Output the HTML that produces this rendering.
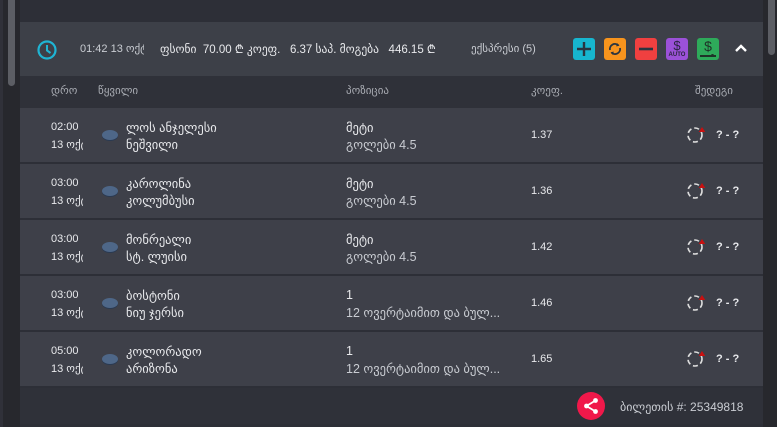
<!DOCTYPE html>
<html><head><meta charset="utf-8"><style>
*{margin:0;padding:0;box-sizing:border-box}
body{width:777px;height:427px;background:#2d2f37;position:relative;overflow:hidden;font-family:"Liberation Sans","DejaVu Sans",sans-serif;color:#e8e9ec}
.abs{position:absolute}
.t{font-size:12.5px;white-space:nowrap}
.row{position:absolute;left:20px;width:743px;height:54px;background:#3e4049}
.btn{position:absolute;top:38px;width:22px;height:22px;border-radius:3px}
.tm{overflow:hidden;width:32px}
</style></head><body>
<div class="abs" style="left:0;top:0;width:3px;height:427px;background:#303139"></div>
<div class="abs" style="left:3px;top:0;width:17px;height:427px;background:#27282d"></div>
<div class="abs" style="left:8px;top:0;width:7px;height:86px;background:#5c5e64;border-radius:0 0 4px 4px"></div>
<div class="abs" style="left:763px;top:0;width:14px;height:427px;background:#27282d"></div>
<div class="abs" style="left:768px;top:0;width:7px;height:55px;background:#5c5e64;border-radius:0 0 4px 4px"></div>

<div class="abs" style="left:20px;top:22px;width:743px;height:54px;background:#3d4048"></div>
<svg class="abs" style="left:36px;top:39px" width="22" height="22" viewBox="0 0 22 22"><circle cx="11" cy="11" r="8.5" fill="none" stroke="#1fb5d4" stroke-width="2.2"/><path d="M11 6v5.5l3.5 2.5" fill="none" stroke="#1fb5d4" stroke-width="2"/></svg>
<div class="abs t" style="left:80px;top:42px;color:#c9ccd2;font-size:11px;width:64px;overflow:hidden">01:42 13 ოქტ</div>
<div class="abs t" style="left:160px;top:42px;font-size:11.5px">ფსონი&nbsp; 70.00 ₾ კოეფ.&nbsp;&nbsp; 6.37 საპ. მოგება&nbsp;&nbsp; 446.15 ₾</div>
<div class="abs t" style="left:471px;top:42px;color:#c9ccd2;font-size:11px">ექსპრესი (5)</div>
<div class="btn" style="left:573px;background:#17b6cf"><svg width="22" height="22"><path d="M11 4v14M4 11h14" stroke="#2a3540" stroke-width="2.4"/></svg></div>
<div class="btn" style="left:604px;background:#f7941d"><svg width="22" height="22"><path d="M6 12a5 5 0 0 1 8.5-4.5M16 10a5 5 0 0 1-8.5 4.5" fill="none" stroke="#2a3540" stroke-width="1.8"/><path d="M13 5l2.5 2.8-3.3.6zM9 17l-2.5-2.8 3.3-.6z" fill="#2a3540"/></svg></div>
<div class="btn" style="left:635px;background:#f04040"><svg width="22" height="22"><path d="M4 11h14" stroke="#2a3540" stroke-width="2.6"/></svg></div>
<div class="btn" style="left:666px;background:#9b51d8"><div style="position:absolute;left:0;width:22px;top:1px;text-align:center;font-size:13px;line-height:14px;color:#2a2540">$</div><div style="position:absolute;left:0;width:22px;top:14px;text-align:center;font-size:6px;color:#2a2540;font-weight:bold">AUTO</div></div>
<div class="btn" style="left:697px;background:#2eaa5a"><div style="position:absolute;left:0;width:22px;top:1px;text-align:center;font-size:14px;line-height:14px;color:#1f3328">$</div><div style="position:absolute;left:3px;top:17px;width:16px;height:1.5px;background:#1f3328"></div><div style="position:absolute;left:14px;top:16px;width:3px;height:3px;border-radius:2px;background:#1f3328"></div></div>
<svg class="abs" style="left:734px;top:43px" width="14" height="10"><path d="M2 8l5-5 5 5" fill="none" stroke="#fff" stroke-width="2.4"/></svg>

<div class="abs" style="left:20px;top:76px;width:743px;height:32px;background:#2f3139"></div>
<div class="abs t" style="left:51px;top:84px;color:#a9acb3;font-size:11px">დრო</div>
<div class="abs t" style="left:98px;top:84px;color:#a9acb3;font-size:11px">წყვილი</div>
<div class="abs t" style="left:346px;top:84px;color:#a9acb3;font-size:11px">პოზიცია</div>
<div class="abs t" style="left:531px;top:84px;color:#a9acb3;font-size:11px">კოეფ.</div>
<div class="abs t" style="left:695px;top:84px;color:#a9acb3;font-size:11px">შედეგი</div>

<div class="row" style="top:108px"></div>
<div class="row" style="top:164px"></div>
<div class="row" style="top:220px"></div>
<div class="row" style="top:276px"></div>
<div class="row" style="top:332px"></div>

<div class="abs t" style="left:51px;top:121px;font-size:11px">02:00</div><div class="abs t tm" style="left:51px;top:138px;font-size:11px">13 ოქტ</div>
<div class="abs t" style="left:51px;top:177px;font-size:11px">03:00</div><div class="abs t tm" style="left:51px;top:194px;font-size:11px">13 ოქტ</div>
<div class="abs t" style="left:51px;top:233px;font-size:11px">03:00</div><div class="abs t tm" style="left:51px;top:250px;font-size:11px">13 ოქტ</div>
<div class="abs t" style="left:51px;top:289px;font-size:11px">03:00</div><div class="abs t tm" style="left:51px;top:306px;font-size:11px">13 ოქტ</div>
<div class="abs t" style="left:51px;top:345px;font-size:11px">05:00</div><div class="abs t tm" style="left:51px;top:362px;font-size:11px">13 ოქტ</div>

<div class="abs" style="left:102px;top:130px;width:16px;height:10px;border-radius:50%;background:#4e6788;box-shadow:0 1px 0 #2a3a52"></div>
<div class="abs" style="left:102px;top:186px;width:16px;height:10px;border-radius:50%;background:#4e6788;box-shadow:0 1px 0 #2a3a52"></div>
<div class="abs" style="left:102px;top:242px;width:16px;height:10px;border-radius:50%;background:#4e6788;box-shadow:0 1px 0 #2a3a52"></div>
<div class="abs" style="left:102px;top:298px;width:16px;height:10px;border-radius:50%;background:#4e6788;box-shadow:0 1px 0 #2a3a52"></div>
<div class="abs" style="left:102px;top:354px;width:16px;height:10px;border-radius:50%;background:#4e6788;box-shadow:0 1px 0 #2a3a52"></div>

<div class="abs t" style="left:126px;top:120px">ლოს ანჯელესი</div><div class="abs t" style="left:126px;top:137px">ნეშვილი</div>
<div class="abs t" style="left:126px;top:176px">კაროლინა</div><div class="abs t" style="left:126px;top:193px">კოლუმბუსი</div>
<div class="abs t" style="left:126px;top:232px">მონრეალი</div><div class="abs t" style="left:126px;top:249px">სტ. ლუისი</div>
<div class="abs t" style="left:126px;top:288px">ბოსტონი</div><div class="abs t" style="left:126px;top:305px">ნიუ ჯერსი</div>
<div class="abs t" style="left:126px;top:344px">კოლორადო</div><div class="abs t" style="left:126px;top:361px">არიზონა</div>

<div class="abs t" style="left:346px;top:120px">მეტი</div><div class="abs t" style="left:346px;top:137px;color:#c9ccd2">გოლები 4.5</div>
<div class="abs t" style="left:346px;top:176px">მეტი</div><div class="abs t" style="left:346px;top:193px;color:#c9ccd2">გოლები 4.5</div>
<div class="abs t" style="left:346px;top:232px">მეტი</div><div class="abs t" style="left:346px;top:249px;color:#c9ccd2">გოლები 4.5</div>
<div class="abs t" style="left:346px;top:288px">1</div><div class="abs t" style="left:346px;top:305px;color:#c9ccd2">12 ოვერტაიმით და ბულ...</div>
<div class="abs t" style="left:346px;top:344px">1</div><div class="abs t" style="left:346px;top:361px;color:#c9ccd2">12 ოვერტაიმით და ბულ...</div>

<div class="abs t" style="left:531px;top:129px;font-size:11px">1.37</div>
<div class="abs t" style="left:531px;top:185px;font-size:11px">1.36</div>
<div class="abs t" style="left:531px;top:241px;font-size:11px">1.42</div>
<div class="abs t" style="left:531px;top:297px;font-size:11px">1.46</div>
<div class="abs t" style="left:531px;top:353px;font-size:11px">1.65</div>

<svg class="abs" style="left:685px;top:125px" width="22" height="20"><circle cx="10" cy="10" r="7" fill="none" stroke="#ddd" stroke-width="1.6" stroke-dasharray="5 3"/><path d="M17 2l3.3 5h-6.6z" fill="#c81010"/></svg>
<svg class="abs" style="left:685px;top:181px" width="22" height="20"><circle cx="10" cy="10" r="7" fill="none" stroke="#ddd" stroke-width="1.6" stroke-dasharray="5 3"/><path d="M17 2l3.3 5h-6.6z" fill="#c81010"/></svg>
<svg class="abs" style="left:685px;top:237px" width="22" height="20"><circle cx="10" cy="10" r="7" fill="none" stroke="#ddd" stroke-width="1.6" stroke-dasharray="5 3"/><path d="M17 2l3.3 5h-6.6z" fill="#c81010"/></svg>
<svg class="abs" style="left:685px;top:293px" width="22" height="20"><circle cx="10" cy="10" r="7" fill="none" stroke="#ddd" stroke-width="1.6" stroke-dasharray="5 3"/><path d="M17 2l3.3 5h-6.6z" fill="#c81010"/></svg>
<svg class="abs" style="left:685px;top:349px" width="22" height="20"><circle cx="10" cy="10" r="7" fill="none" stroke="#ddd" stroke-width="1.6" stroke-dasharray="5 3"/><path d="M17 2l3.3 5h-6.6z" fill="#c81010"/></svg>
<div class="abs t" style="left:716px;top:129px;font-size:11px;font-weight:bold">? - ?</div>
<div class="abs t" style="left:716px;top:185px;font-size:11px;font-weight:bold">? - ?</div>
<div class="abs t" style="left:716px;top:241px;font-size:11px;font-weight:bold">? - ?</div>
<div class="abs t" style="left:716px;top:297px;font-size:11px;font-weight:bold">? - ?</div>
<div class="abs t" style="left:716px;top:353px;font-size:11px;font-weight:bold">? - ?</div>

<div class="abs" style="left:20px;top:388px;width:743px;height:36px;background:#2f3139"></div>
<svg class="abs" style="left:577px;top:392px" width="28" height="28"><circle cx="14" cy="14" r="14" fill="#f0184a"/><path d="M18.5 8.5L9.5 14l9 5.5" fill="none" stroke="#fff" stroke-width="1.8"/><circle cx="18.5" cy="8.5" r="2.4" fill="#fff"/><circle cx="9.5" cy="14" r="2.4" fill="#fff"/><circle cx="18.5" cy="19.5" r="2.4" fill="#fff"/></svg>
<div class="abs t" style="left:620px;top:400px;color:#c9ccd2;font-size:12px">ბილეთის #: 25349818</div>
</body></html>
